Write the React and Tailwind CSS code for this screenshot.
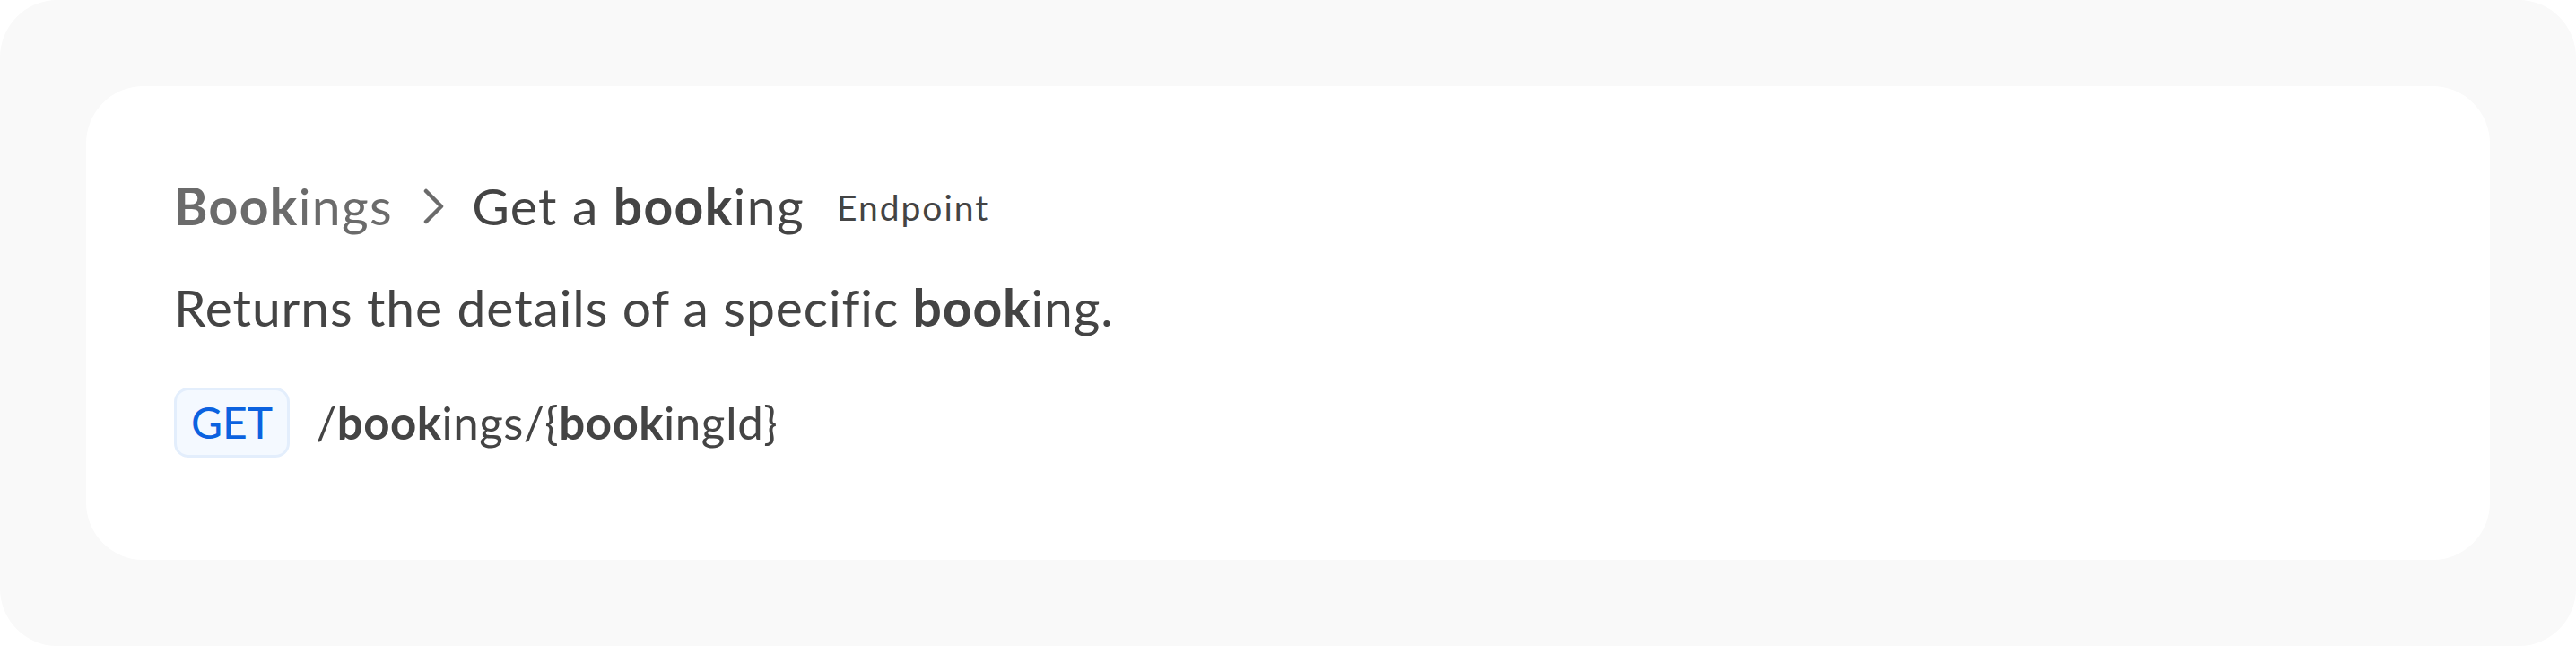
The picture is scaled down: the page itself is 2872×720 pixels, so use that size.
import React from 'react';

// Part du mot mise en gras (les lettres qui correspondent à la recherche)
function Hit({ children }) {
  return <span className="font-bold">{children}</span>;
}

function Chevron() {
  return (
    <svg width="24" height="40" viewBox="0 0 24 40" fill="none" className="shrink-0">
      <polyline
        points="3,3 20,20 3,37"
        stroke="#6b6b6b"
        strokeWidth="4.5"
        strokeLinecap="round"
        strokeLinejoin="round"
      />
    </svg>
  );
}

export default function App() {
  return (
    <div
      className="w-[2872px] h-[720px] bg-[#f9f9f9] rounded-[64px] p-[96px]"
      style={{ fontFamily: 'Lato, "Noto Sans", sans-serif' }}
    >
      <div className="h-full bg-white rounded-[64px] pl-[98px] pt-[99px] flex flex-col">
        {/* Fil d'Ariane */}
        <div className="flex items-center h-[70px]">
          <span className="text-[57px] tracking-[1.4px] text-[#6b6b6b]">
            <Hit>Book</Hit>ings
          </span>
          <span className="ml-[34px] mr-[30px] flex items-center">
            <Chevron />
          </span>
          <span className="text-[57px] tracking-[1.4px] text-[#444444]">
            Get a <Hit>book</Hit>ing
          </span>
          <span className="ml-[36px] text-[39px] tracking-[2px] text-[#444444] pt-[2px]">Endpoint</span>
        </div>

        {/* Description */}
        <p className="mt-[42px] text-[57px] tracking-[0.9px] leading-[70px] text-[#444444]">
          Returns the details of a specific <Hit>book</Hit>ing.
        </p>

        {/* Méthode + chemin */}
        <div className="mt-[55px] flex items-center">
          <span className="h-[78px] px-[16px] flex items-center rounded-[16px] border-[3px] border-[#e3eefc] bg-[#f4f9ff] text-[48px] text-[#0b62e0]">
            GET
          </span>
          <span className="ml-[29px] text-[51px] tracking-[0.5px] text-[#444444]">
            /<Hit>book</Hit>ings/&#123;<Hit>book</Hit>ingId&#125;
          </span>
        </div>
      </div>
    </div>
  );
}
